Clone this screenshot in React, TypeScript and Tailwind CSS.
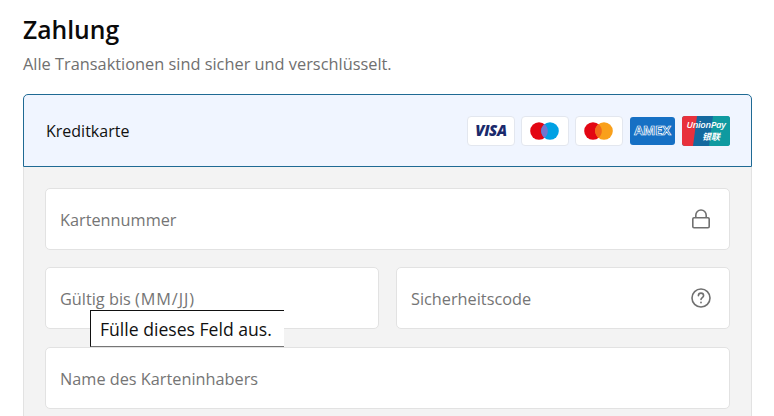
import React from 'react';

const font = { fontFamily: '"Open Sans", "Noto Sans", sans-serif' };

const Badge: React.FC<{ children: React.ReactNode }> = ({ children }) => (
  <div className="w-[48px] h-[30px] rounded-[4px] bg-white border border-[#e3e7ef] flex items-center justify-center">
    {children}
  </div>
);

const Circles: React.FC<{ left: string; right: string; mid: string }> = ({ left, right, mid }) => (
  <svg width="29" height="18" viewBox="0 0 29 18" className="-ml-[1px]">
    <circle cx="9" cy="9" r="8.8" fill={left} />
    <circle cx="20" cy="9" r="8.8" fill={right} />
    <path d="M14.5 2.1a8.8 8.8 0 0 1 0 13.8a8.8 8.8 0 0 1 0-13.8z" fill={mid} />
  </svg>
);

const Field: React.FC<{ label: React.ReactNode; className?: string; icon?: React.ReactNode }> = ({ label, className, icon }) => (
  <div className={`h-[62px] bg-white border border-[#e2e2e2] rounded-[5px] flex items-center justify-between pl-[14px] pr-[19px] ${className ?? ''}`}>
    <span className="text-[16.3px] pt-[2px] text-[#757575]">{label}</span>
    {icon}
  </div>
);

const App: React.FC = () => {
  return (
    <div className="w-[774px] h-[416px] overflow-hidden bg-white pl-[23px] pr-[22px] pt-[14px]" style={font}>
      <h2 className="text-[24.7px] leading-[32px] font-semibold text-[#0a0a0a]">Zahlung</h2>
      <p className="text-[16.35px] leading-[24px] mt-[6px] text-[#707070]">Alle Transaktionen sind sicher und verschlüsselt.</p>

      <div className="mt-[18px]">
        <div className="h-[73px] bg-[#f0f5ff] border border-[#1f6a94] rounded-t-[5px] flex items-center justify-between pl-[22px] pr-[21px]">
          <span className="text-[16px] text-[#111111]">Kreditkarte</span>
          <div className="flex items-center gap-[6px]">
            <Badge>
              <span className="text-[15px] leading-none font-extrabold italic text-[#1a2a6c] tracking-[-0.4px]">VISA</span>
            </Badge>
            <Badge>
              <Circles left="#e30613" right="#00a1e4" mid="#7375cf" />
            </Badge>
            <Badge>
              <Circles left="#e30613" right="#f9a01b" mid="#f26a1b" />
            </Badge>
            <div className="w-[45px] h-[28px] mx-[1px] rounded-[3px] bg-[#1670c4] flex items-center justify-center">
              <span className="text-[13px] leading-none font-bold text-[#1670c4] tracking-[-0.2px] [-webkit-text-stroke:0.7px_white]">AMEX</span>
            </div>
            <div className="relative w-[48px] h-[30px] rounded-[3px] overflow-hidden bg-[#0f9aa0]">
              <svg width="48" height="30" viewBox="0 0 48 30" className="absolute inset-0">
                <path d="M0 0h20l-4 30H0z" fill="#e8313c" />
                <path d="M15 0h20l-4 30H11z" fill="#14699f" />
                <path d="M31 0h17v30H27z" fill="#0f9aa0" />
              </svg>
              <div className="relative flex flex-col items-center pt-[4px] text-white">
                <span className="text-[9.5px] italic font-semibold leading-[10px] tracking-[-0.3px] whitespace-nowrap">UnionPay</span>
                <span className="text-[9px] italic font-semibold leading-[10px] ml-[10px] mt-[2px]" style={{ fontFamily: '"Noto Sans CJK SC", sans-serif' }}>银联</span>
              </div>
            </div>
          </div>
        </div>

        <div className="bg-[#f3f3f3] border-x border-[#e2e2e2] px-[21px] pt-[21px] h-[260px] relative">
          <Field
            label="Kartennummer"
            icon={
              <svg width="18" height="20" viewBox="0 0 18 20" fill="none" stroke="#707070" strokeWidth="1.6" strokeLinejoin="round">
                <rect x="0.8" y="8.8" width="16.4" height="10" rx="1.2" />
                <path d="M3.8 8.8V6.2a5.2 5.2 0 0 1 10.4 0v2.6" />
              </svg>
            }
          />
          <div className="flex gap-[17px] mt-[17px]">
            <Field label={<>Gültig bis <span className="tracking-[0.9px]">(MM/JJ)</span></>} className="w-[334px]" />
            <Field
              label="Sicherheitscode"
              className="flex-1"
              icon={
                <svg width="20" height="20" viewBox="0 0 20 20" fill="none" stroke="#707070" strokeWidth="1.6" strokeLinecap="round" className="-mr-[1px]">
                  <circle cx="10" cy="10" r="9" />
                  <path d="M7.4 7.7a2.6 2.6 0 0 1 5.2 0c0 1.8-2.6 1.9-2.6 3.7" />
                  <path d="M10 14.4v.1" strokeWidth="1.8" />
                </svg>
              }
            />
          </div>
          <Field label="Name des Karteninhabers" className="mt-[18px]" />

          <div className="absolute left-[66px] top-[143px] w-[194px] h-[37px] bg-white border-l border-t border-b border-l-[#111111] border-t-[#111111] border-b-[#767676] flex items-center pl-[9px]">
            <span className="text-[17.6px] pt-[2px] text-[#111111] whitespace-nowrap">Fülle dieses Feld aus.</span>
          </div>
        </div>
      </div>
    </div>
  );
};

export default App;
